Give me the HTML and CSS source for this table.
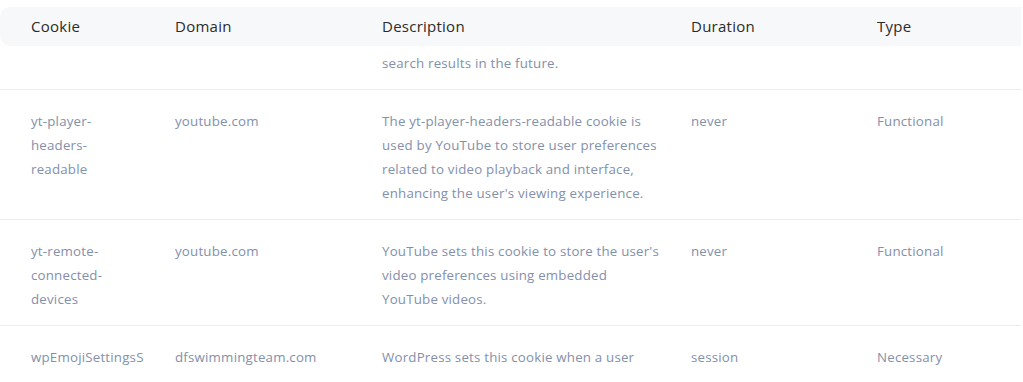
FILE: index.html
```html
<!DOCTYPE html>
<html lang="en">
<head>
<meta charset="utf-8">
<title>Cookie table</title>
<link rel="stylesheet" href="styles.css">
</head>
<body>
<div class="cookie-table">
  <div class="thead">
    <div class="th">Cookie</div>
    <div class="th">Domain</div>
    <div class="th">Description</div>
    <div class="th">Duration</div>
    <div class="th">Type</div>
  </div>
  <div class="tbody">
    <div class="tr first">
      <div class="td"></div>
      <div class="td"></div>
      <div class="td">search results in the future.</div>
      <div class="td"></div>
      <div class="td"></div>
    </div>
    <div class="tr">
      <div class="td">yt-player-<br>headers-<br>readable</div>
      <div class="td">youtube.com</div>
      <div class="td">The yt-player-headers-readable cookie is<br>used by YouTube to store user preferences<br>related to video playback and interface,<br>enhancing the user's viewing experience.</div>
      <div class="td">never</div>
      <div class="td">Functional</div>
    </div>
    <div class="tr">
      <div class="td">yt-remote-<br>connected-<br>devices</div>
      <div class="td">youtube.com</div>
      <div class="td">YouTube sets this cookie to store the user's<br>video preferences using embedded<br>YouTube videos.</div>
      <div class="td">never</div>
      <div class="td">Functional</div>
    </div>
    <div class="tr last">
      <div class="td">wpEmojiSettingsS</div>
      <div class="td">dfswimmingteam.com</div>
      <div class="td">WordPress sets this cookie when a user</div>
      <div class="td">session</div>
      <div class="td">Necessary</div>
    </div>
  </div>
</div>
</body>
</html>
```

FILE: styles.css
```css
html, body {
  margin: 0;
  padding: 0;
  background: #ffffff;
}

body {
  font-family: "Open Sans", "Liberation Sans", sans-serif;
  overflow: hidden;
  height: 382px;
}

.cookie-table {
  width: 1021px;
  padding-top: 7px;
}

.thead {
  height: 39px;
  background: #f7f8fa;
  border-radius: 10px 0 0 10px;
  display: grid;
  grid-template-columns: 144px 207px 309px 186px 1fr;
  padding-left: 31px;
  align-items: center;
}

.th {
  font-size: 15px;
  letter-spacing: 0.25px;
  color: #2b2b2b;
  line-height: 38px;
  padding-bottom: 1px;
}

.tr {
  display: grid;
  grid-template-columns: 144px 207px 309px 186px 1fr;
  padding: 19px 0 14px 31px;
  border-bottom: 1px solid #ececec;
}

.tr.first {
  padding-top: 5px;
}

.tr.last {
  border-bottom: none;
}

.td {
  font-size: 13.3px;
  letter-spacing: 0.2px;
  line-height: 24px;
  color: #8390ab;
}
```
